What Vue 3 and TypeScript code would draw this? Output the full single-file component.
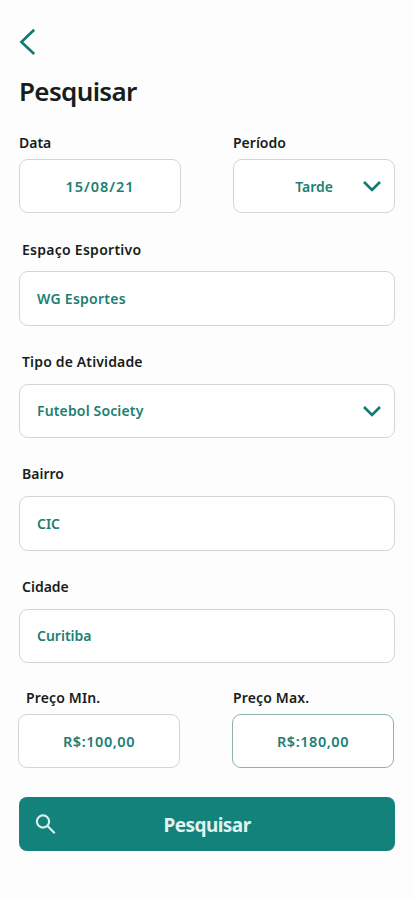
<script setup lang="ts">
import { ref } from 'vue'

interface Field {
  id: string
  label: string
  value: string
  select?: boolean
}

const date = ref('15/08/21')
const period = ref('Tarde')
const fields = ref<Field[]>([
  { id: 'venue', label: 'Espaço Esportivo', value: 'WG Esportes' },
  { id: 'activity', label: 'Tipo de Atividade', value: 'Futebol Society', select: true },
  { id: 'district', label: 'Bairro', value: 'CIC' },
  { id: 'city', label: 'Cidade', value: 'Curitiba' },
])
</script>

<template>
  <main class="screen">
    <button class="back" type="button">
      <svg width="18" height="28" viewBox="0 0 18 28"><path d="M15.2 1.8 2.4 14l12.8 12" /></svg>
    </button>
    <h1 class="title"><span>Pesquisar</span></h1>

    <div class="pair when">
      <section class="field">
        <div class="label"><span>Data</span></div>
        <div class="box centered"><span class="date">{{ date }}</span></div>
      </section>
      <section class="field">
        <div class="label"><span>Período</span></div>
        <div class="box centered">
          <span class="afternoon">{{ period }}</span>
          <svg class="chevron" width="20" height="14" viewBox="0 0 20 14"><path d="M2 3l8 8 8-8" /></svg>
        </div>
      </section>
    </div>

    <section v-for="field in fields" :key="field.id" class="field wide" :class="field.id">
      <div class="label"><span>{{ field.label }}</span></div>
      <div class="box">
        <span>{{ field.value }}</span>
        <svg v-if="field.select" class="chevron" width="20" height="14" viewBox="0 0 20 14"><path d="M2 3l8 8 8-8" /></svg>
      </div>
    </section>

    <div class="pair prices">
      <section class="field min">
        <div class="label"><span>Preço MIn.</span></div>
        <div class="box centered"><span class="price">R$:100,00</span></div>
      </section>
      <section class="field max">
        <div class="label"><span>Preço Max.</span></div>
        <div class="box centered active"><span class="price">R$:180,00</span></div>
      </section>
    </div>

    <button class="submit" type="button">
      <svg width="22" height="22" viewBox="0 0 22 22"><circle cx="8" cy="7.5" r="6.1" /><path d="M12.3 11.8l7.4 7.4" /></svg>
      <span>Pesquisar</span>
    </button>
  </main>
</template>

<style>
body {
  margin: 0;
  background: #fdfdfd;
}
</style>

<style scoped>
.screen {
  box-sizing: border-box;
  width: 413px;
  height: 900px;
  padding: 28px 18px 0 19px;
  background: #fdfdfd;
  color: #171d1c;
  font-family: "Noto Sans", sans-serif;
  font-size: 14px;
  font-weight: 600;
  overflow: hidden;
}
button {
  border: 0;
  padding: 0;
  font: inherit;
}
svg {
  display: block;
  fill: none;
  stroke: #0e7a70;
  stroke-width: 2.6;
}
.back {
  display: block;
  height: 28px;
  background: none;
}
.title {
  margin: 17px 0 0;
  height: 36px;
  line-height: 36px;
  font-size: 26px;
  font-weight: 600;
  letter-spacing: -0.65px;
}
.pair {
  display: flex;
  justify-content: space-between;
}
.when {
  margin-top: 24px;
}
.when .field,
.prices .field {
  width: 162px;
}
.wide {
  margin-top: 26px;
}
.label {
  height: 20px;
  margin-bottom: 6px;
  line-height: 20px;
  white-space: nowrap;
}
.wide .label {
  height: 22px;
  padding-left: 3px;
  margin-bottom: 10px;
  line-height: 20px;
}
.wide.venue .label {
  line-height: 22px;
}
.venue {
  letter-spacing: 0.27px;
}
.activity {
  letter-spacing: 0.15px;
}
.box {
  box-sizing: border-box;
  display: flex;
  align-items: center;
  height: 54.4px;
  padding: 0 12px 0 17px;
  border: 1px solid #d3d5d4;
  border-radius: 9px;
  background: #fff;
  color: #1b8072;
  white-space: nowrap;
}
.centered {
  justify-content: center;
  padding: 0;
}
.box.active {
  border-color: #8cb3a9;
}
.date {
  font-size: 14.5px;
  letter-spacing: 0.95px;
}
.price {
  font-size: 14.5px;
  letter-spacing: 0.55px;
}
.chevron {
  margin-left: auto;
}
.centered .chevron {
  margin: 0 12px 0 29px;
}
.centered:has(.chevron) {
  justify-content: flex-end;
}
.prices {
  margin: 25px 1px 0 -1px;
}
.prices .label {
  margin-bottom: 6px;
  letter-spacing: 0.15px;
}
.min .label {
  padding-left: 8px;
}
.max .label {
  padding-left: 1px;
}
.submit {
  display: grid;
  grid-template-columns: 16px 22px 1fr 38px;
  align-items: center;
  width: 376px;
  height: 54px;
  margin-top: 28.5px;
  border-radius: 8px;
  background: #13827a;
  color: #e0f3f0;
  font-size: 19px;
  font-weight: 700;
  letter-spacing: -0.55px;
  line-height: 56px;
}
.submit svg {
  grid-column: 2;
  stroke: #d7f0ec;
  stroke-width: 2.2;
}
</style>
